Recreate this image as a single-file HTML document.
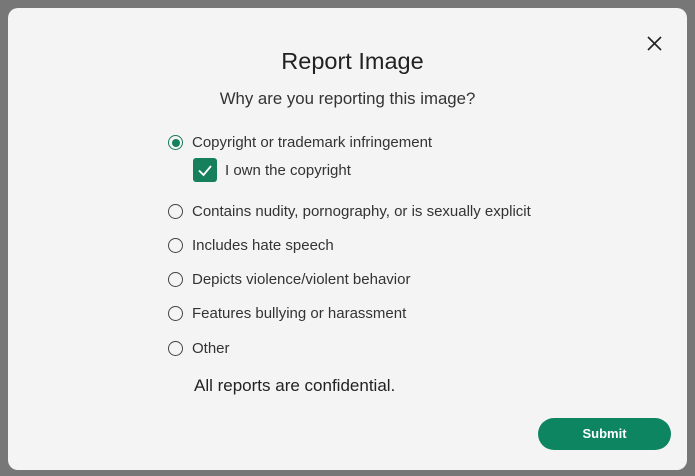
<!DOCTYPE html>
<html><head><style>
body{margin:0;width:695px;height:476px;background:#777;position:relative;overflow:hidden;font-family:"Liberation Sans",sans-serif;color:#222}
.m{position:absolute;left:8px;top:8px;width:679px;height:462px;background:#f4f4f4;border-radius:10px}
.t{position:absolute;left:0;width:695px;text-align:center}
.r{position:absolute;left:168px;font-size:15px;color:#333;display:flex;align-items:center}
.c{width:15px;height:15px;border:1.3px solid #444;border-radius:50%;box-sizing:border-box;margin-right:9px;flex:none}
</style></head><body>
<div class="m"></div>
<svg style="position:absolute;left:647px;top:36px" width="15" height="15"><path d="M1 1L14 14M14 1L1 14" stroke="#222" stroke-width="1.6"/></svg>
<div class="t" style="top:48px;font-size:23.5px;color:#222;padding-left:5px">Report Image</div>
<div class="t" style="top:89px;font-size:16.8px;color:#333">Why are you reporting this image?</div>
<div class="r" style="top:134px"><div class="c" style="border-color:#1a7a5a;display:flex;align-items:center;justify-content:center"><div style="width:8px;height:8px;border-radius:50%;background:#16805c"></div></div>Copyright or trademark infringement</div>
<div class="r" style="left:193px;top:158px"><div style="width:24px;height:24px;border-radius:3px;background:#16805c;margin-right:8px;position:relative"><svg width="24" height="24"><path d="M6 12.5L10.5 17L18 8" stroke="#fff" stroke-width="1.8" fill="none"/></svg></div>I own the copyright</div>
<div class="r" style="top:203px"><div class="c"></div>Contains nudity, pornography, or is sexually explicit</div>
<div class="r" style="top:237px"><div class="c"></div>Includes hate speech</div>
<div class="r" style="top:271px"><div class="c"></div>Depicts violence/violent behavior</div>
<div class="r" style="top:305px"><div class="c"></div>Features bullying or harassment</div>
<div class="r" style="top:340px"><div class="c"></div>Other</div>
<div style="position:absolute;left:194px;top:376px;font-size:17px;color:#222">All reports are confidential.</div>
<div style="position:absolute;left:538px;top:418px;width:133px;height:32px;border-radius:16px;background:#0d8560;color:#fff;font-size:13px;font-weight:bold;text-align:center;line-height:32px">Submit</div>
</body></html>
